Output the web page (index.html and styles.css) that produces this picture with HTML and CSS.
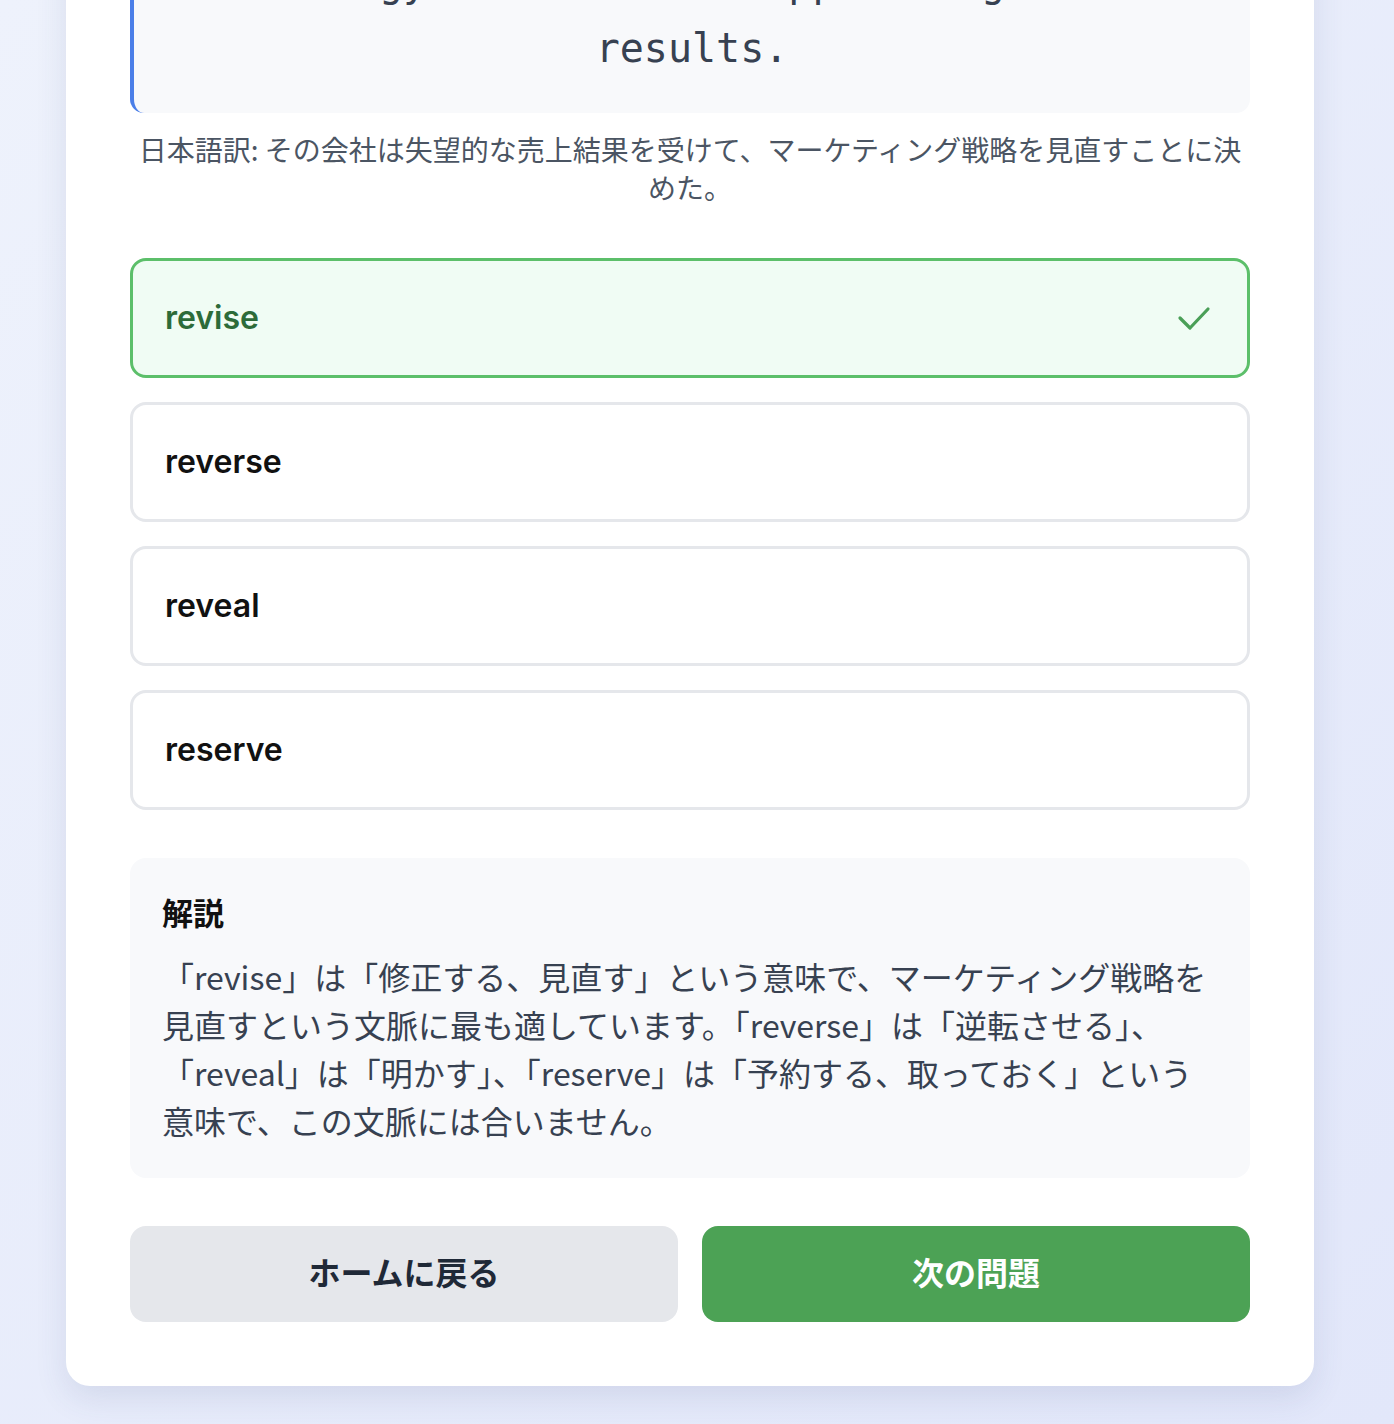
FILE: index.html
```html
<!DOCTYPE html>
<html lang="ja">
<head>
<meta charset="UTF-8">
<meta name="viewport" content="width=device-width, initial-scale=1.0">
<title>語彙クイズ</title>
<link rel="stylesheet" href="styles.css">
</head>
<body>
    <main class="quiz-card">
        <div class="sentence">The company decided to ______ its marketing strategy after the disappointing sales results.</div>
        <p class="translation">日本語訳: その会社は失望的な売上結果を受けて、マーケティング戦略を見直すことに決めた。</p>

        <ul class="options">
            <li class="option correct">
                <span>revise</span>
                <svg class="check" width="34" height="26" viewBox="0 0 34 26"><polyline points="3,13 13,23 31,4" fill="none" stroke="currentColor" stroke-width="3.2" stroke-linecap="round" stroke-linejoin="round"/></svg>
            </li>
            <li class="option"><span>reverse</span></li>
            <li class="option"><span>reveal</span></li>
            <li class="option"><span>reserve</span></li>
        </ul>

        <section class="explanation">
            <h2>解説</h2>
            <p>「revise」は「修正する、見直す」という意味で、マーケティング戦略を見直すという文脈に最も適しています。「reverse」は「逆転させる」、「reveal」は「明かす」、「reserve」は「予約する、取っておく」という意味で、この文脈には合いません。</p>
        </section>

        <div class="actions">
            <button class="btn btn-home">ホームに戻る</button>
            <button class="btn btn-next">次の問題</button>
        </div>
    </main>
</body>
</html>
```

FILE: styles.css
```css
* {
    margin: 0;
    padding: 0;
    box-sizing: border-box;
}
body {
    font-family: Inter, "Noto Sans CJK JP", sans-serif;
    padding: 0 80px 38px 66px;
    background: linear-gradient(135deg, #eef2fc 0%, #e2e7fa 100%);
    min-height: 1424px;
    overflow: hidden;
}
.quiz-card {
    width: 1248px;
    margin-top: -213px;
    padding: 64px;
    background-color: #fff;
    border-radius: 24px;
    box-shadow: 0 12px 32px rgba(60, 70, 120, 0.12);
}
.sentence {
    font-family: "DejaVu Sans Mono", monospace;
    font-size: 40px;
    line-height: 66px;
    color: #374151;
    text-align: center;
    padding: 32px;
    background-color: #f8f9fb;
    border-left: 4px solid #4b7fe8;
    border-radius: 14px;
}
.translation {
    font-family: "Noto Sans CJK JP", sans-serif;
    font-size: 28px;
    line-height: 38px;
    color: #4b5563;
    text-align: center;
    margin-top: 17px;
}
.options {
    list-style: none;
    margin-top: 52px;
    display: flex;
    flex-direction: column;
    gap: 24px;
}
.option {
    display: flex;
    align-items: center;
    justify-content: space-between;
    padding: 33px 32px;
    border: 3px solid #e5e7eb;
    border-radius: 16px;
    font-size: 32px;
    line-height: 48px;
    font-weight: 600;
    color: #111;
    background-color: #fff;
}
.option.correct {
    border-color: #5cbf6a;
    background-color: #f0fcf4;
    color: #2d6b39;
}
.check {
    color: #4a9f57;
    margin-right: 4px;
}
.explanation {
    margin-top: 48px;
    padding: 30px 32px 34px;
    background-color: #f8f9fb;
    border-radius: 16px;
}
.explanation h2 {
    font-family: "Noto Sans CJK JP", sans-serif;
    font-size: 31px;
    line-height: 48px;
    font-weight: 700;
    color: #111;
    margin-bottom: 16px;
}
.explanation p {
    font-family: "Noto Sans CJK JP", sans-serif;
    font-size: 32px;
    line-height: 48px;
    color: #374151;
}
.actions {
    margin-top: 48px;
    display: grid;
    grid-template-columns: 1fr 1fr;
    gap: 24px;
}
.btn {
    font-family: "Noto Sans CJK JP", sans-serif;
    font-size: 32px;
    font-weight: 700;
    line-height: 48px;
    padding: 21px 24px 27px;
    border: none;
    border-radius: 16px;
    cursor: pointer;
}
.btn-home {
    background-color: #e5e7eb;
    color: #1f2937;
}
.btn-next {
    background-color: #4ca255;
    color: #fff;
}
```
